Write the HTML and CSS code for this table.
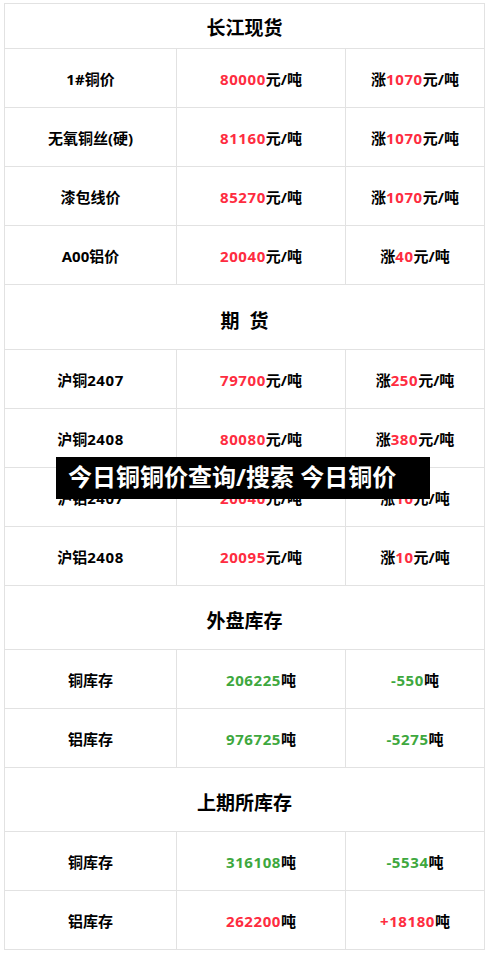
FILE: index.html
```html
<!DOCTYPE html>
<html lang="zh-CN">
<head>
<meta charset="utf-8">
<title>今日铜价</title>
<link rel="stylesheet" href="styles.css">
</head>
<body>
<div class="page">
  <table class="prices">
    <colgroup><col class="c1"><col class="c2"><col class="c3"></colgroup>
    <tr class="head first"><th colspan="3">长江现货</th></tr>
    <tr><td>1#铜价</td><td><span class="num red">80000</span>元/吨</td><td>涨<span class="num red">1070</span>元/吨</td></tr>
    <tr><td>无氧铜丝(硬)</td><td><span class="num red">81160</span>元/吨</td><td>涨<span class="num red">1070</span>元/吨</td></tr>
    <tr><td>漆包线价</td><td><span class="num red">85270</span>元/吨</td><td>涨<span class="num red">1070</span>元/吨</td></tr>
    <tr><td>A00铝价</td><td><span class="num red">20040</span>元/吨</td><td>涨<span class="num red">40</span>元/吨</td></tr>
    <tr class="head tall"><th colspan="3">期&nbsp;&nbsp;货</th></tr>
    <tr><td>沪铜<span class="num">2407</span></td><td><span class="num red">79700</span>元/吨</td><td>涨<span class="num red">250</span>元/吨</td></tr>
    <tr><td>沪铜<span class="num">2408</span></td><td><span class="num red">80080</span>元/吨</td><td>涨<span class="num red">380</span>元/吨</td></tr>
    <tr><td>沪铝<span class="num">2407</span></td><td><span class="num red">20040</span>元/吨</td><td>涨<span class="num red">10</span>元/吨</td></tr>
    <tr><td>沪铝<span class="num">2408</span></td><td><span class="num red">20095</span>元/吨</td><td>涨<span class="num red">10</span>元/吨</td></tr>
    <tr class="head"><th colspan="3">外盘库存</th></tr>
    <tr><td>铜库存</td><td><span class="num green">206225</span>吨</td><td><span class="num green">-550</span>吨</td></tr>
    <tr><td>铝库存</td><td><span class="num green">976725</span>吨</td><td><span class="num green">-5275</span>吨</td></tr>
    <tr class="head"><th colspan="3">上期所库存</th></tr>
    <tr><td>铜库存</td><td><span class="num green">316108</span>吨</td><td><span class="num green">-5534</span>吨</td></tr>
    <tr><td>铝库存</td><td><span class="num red">262200</span>吨</td><td><span class="num red">+18180</span>吨</td></tr>
  </table>
  <div class="banner">今日铜铜价查询/搜索 今日铜价</div>
</div>
</body>
</html>
```

FILE: styles.css
```css
html, body {
  margin: 0;
  padding: 0;
  background: #fff;
}
body {
  font-family: "Open Sans", "Noto Sans CJK SC", sans-serif;
  color: #000;
}
.page {
  position: relative;
  padding: 3px 4px 0 4px;
}
.prices {
  width: 480px;
  border-collapse: collapse;
  table-layout: fixed;
}
.c1 { width: 172px; }
.c2 { width: 169px; }
.c3 { width: 139px; }
.prices th,
.prices td {
  border: 1px solid #e2e2e2;
  text-align: center;
  vertical-align: middle;
  padding: 0;
  font-weight: 700;
  white-space: nowrap;
}
.prices td {
  height: 58px;
  font-size: 15px;
}
.prices th {
  height: 58px;
  padding-top: 5px;
  font-size: 19px;
}
.prices .tall th {
  height: 59px;
}
.prices .first th {
  height: 42px;
  padding-top: 2px;
}
.num {
  letter-spacing: 0.6px;
}
.red { color: #fe2c40; }
.green { color: #3ea83e; }
.banner {
  position: absolute;
  left: 56px;
  top: 457px;
  width: 374px;
  height: 42px;
  box-sizing: border-box;
  padding-left: 12px;
  background: #000;
  color: #fff;
  font-size: 24px;
  font-weight: 700;
  line-height: 40px;
  white-space: nowrap;
  letter-spacing: 0;
}
```
